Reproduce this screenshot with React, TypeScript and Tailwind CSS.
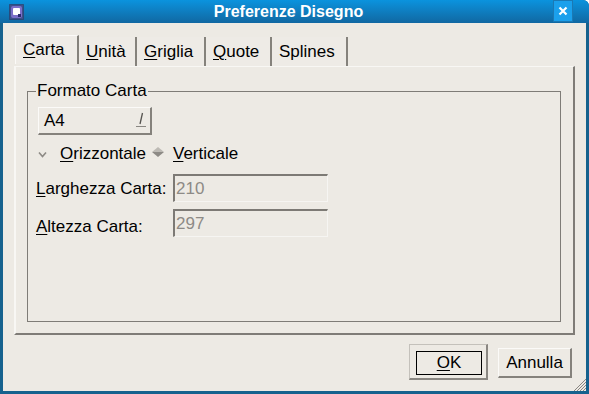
import type { ReactNode } from "react";

function AppIcon() {
  return (
    <svg width="15" height="16" viewBox="0 0 15 16" aria-hidden>
      <rect x="0.5" y="0.5" width="14" height="15" fill="#3f4f8a" stroke="#2a3358" strokeDasharray="1 1" />
      <rect x="2" y="2" width="11" height="12" rx="2" fill="#7b6fc9" />
      <rect x="4" y="4" width="7" height="7" rx="1" fill="#ffffff" />
      <rect x="9" y="10" width="3" height="3" fill="#2b2b6e" />
    </svg>
  );
}

function Mn({ children }: { children: ReactNode }) {
  return <span className="underline underline-offset-[2px] decoration-1">{children}</span>;
}

function Tab({ w, active, children }: { w: string; active?: boolean; children: ReactNode }) {
  return (
    <div
      className={`${w} flex h-[29px] items-center border-r-2 border-r-[#85827c] pl-[7px] ${
        active ? "border-l border-t border-l-[#fbfaf8] border-t-[#fbfaf8] bg-[#efece7]" : "mt-[2px] h-[27px] bg-[#eeebe6]"
      }`}
    >
      {children}
    </div>
  );
}

export default function App() {
  return (
    <div className="flex h-[394px] w-[589px] flex-col overflow-hidden rounded-tr-[6px] bg-[#16628e] font-['Liberation_Sans',Arial,sans-serif] text-[17px] leading-[20px] text-black">
      {/* title bar */}
      <div className="flex h-[23px] items-center bg-gradient-to-b from-[#0a93de] to-[#1068a2] pl-[9px]">
        <AppIcon />
        <div className="flex-1 text-center text-[16px] font-bold text-white">Preferenze Disegno</div>
        <div className="mr-[16px] flex h-[22px] w-[20px] items-center justify-center self-start border border-[#1b79b4] bg-[#1ba0ec]">
          <svg width="10" height="10" viewBox="0 0 10 10" aria-hidden>
            <path d="M1.5 1.5 L8.5 8.5 M8.5 1.5 L1.5 8.5" stroke="#ffffff" strokeWidth="2.2" />
          </svg>
        </div>
      </div>

      {/* body */}
      <div className="relative mx-[3px] mb-[3px] flex flex-1 flex-col bg-[#edeae4]">
        {/* tabs */}
        <div className="flex pl-[12px] pt-[12px]">
          <Tab w="w-[64px]" active>
            <span><Mn>C</Mn>arta</span>
          </Tab>
          <Tab w="w-[58px]">
            <span><Mn>U</Mn>nità</span>
          </Tab>
          <Tab w="w-[69px]">
            <span><Mn>G</Mn>riglia</span>
          </Tab>
          <Tab w="w-[66px]">
            <span><Mn>Q</Mn>uote</span>
          </Tab>
          <Tab w="w-[76px]">
            <span>Splines</span>
          </Tab>
        </div>

        {/* panel */}
        <div className="ml-[11px] h-[269px] w-[561px] border-b-2 border-l-2 border-r-2 border-t border-b-[#7f7c77] border-l-[#f8f7f4] border-r-[#7f7c77] border-t-[#f8f7f4] pl-[11px] pt-[24px]">
          <div className="relative flex h-[231px] w-[534px] flex-col border border-[#7f7c77]">
            <span className="absolute -top-[11px] left-[8px] bg-[#edeae4] px-[1px]">Formato Carta</span>

            {/* option menu */}
            <div className="ml-[10px] mt-[15px] flex h-[28px] w-[114px] items-center justify-between border-b-2 border-l border-r-2 border-t border-b-[#85827c] border-l-[#fbfaf8] border-r-[#85827c] border-t-[#fbfaf8] pl-[5px] pr-[3px]">
              <span>A4</span>
              <svg width="12" height="17" viewBox="0 0 12 17" aria-hidden>
                <path d="M7.5 1 L5 12" stroke="#55534f" strokeWidth="1.3" />
                <path d="M1 14.5 H11" stroke="#8a8782" strokeWidth="1" />
              </svg>
            </div>

            {/* radio row */}
            <div className="mt-[9px] flex h-[20px] items-center">
              <svg className="ml-[10px]" width="9" height="7" viewBox="0 0 9 7" aria-hidden>
                <path d="M1 1.5 L4.5 5.5 L8 1.5" fill="none" stroke="#8d8a85" strokeWidth="1.6" />
              </svg>
              <span className="ml-[13px]"><Mn>O</Mn>rizzontale</span>
              <svg className="ml-[6px] -mt-[4px]" width="12" height="10" viewBox="0 0 12 10" aria-hidden>
                <polygon points="6,0 12,5 0,5" fill="#bdbab4" />
                <polygon points="0,5 12,5 6,10" fill="#8d8a85" />
              </svg>
              <span className="ml-[9px]"><Mn>V</Mn>erticale</span>
            </div>

            {/* Larghezza */}
            <div className="mt-[10px] flex items-end">
              <span className="ml-[8px] w-[137px] pb-[3px]"><Mn>L</Mn>arghezza Carta:</span>
              <div className="flex h-[28px] w-[155px] items-center border-b border-l-2 border-r border-t-2 border-b-[#f6f5f2] border-l-[#7d7a75] border-r-[#f6f5f2] border-t-[#7d7a75] pl-[1px] text-[#8d8a86]">
                210
              </div>
            </div>

            {/* Altezza */}
            <div className="mt-[7px] flex items-end">
              <span className="ml-[8px] w-[137px]"><Mn>A</Mn>ltezza Carta:</span>
              <div className="flex h-[28px] w-[155px] items-center border-b border-l-2 border-r border-t-2 border-b-[#f6f5f2] border-l-[#7d7a75] border-r-[#f6f5f2] border-t-[#7d7a75] pl-[1px] text-[#8d8a86]">
                297
              </div>
            </div>
          </div>
        </div>

        {/* buttons */}
        <div className="mr-[14px] mt-[9px] flex items-start justify-end">
          <div className="h-[36px] w-[79px] border-b-2 border-l border-r-2 border-t border-b-[#8a8782] border-l-[#c4c1bb] border-r-[#8a8782] border-t-[#c4c1bb] pl-[6px] pt-[6px]">
            <div className="flex h-[24px] w-[66px] items-center justify-center border border-black">
              <span><Mn>O</Mn>K</span>
            </div>
          </div>
          <div className="ml-[10px] mt-[4px] flex h-[30px] w-[74px] items-center justify-center border-b-2 border-l border-r-2 border-t border-b-[#85827c] border-l-[#fbfaf8] border-r-[#85827c] border-t-[#fbfaf8]">
            Annulla
          </div>
        </div>

        {/* resize grip */}
        <svg className="absolute bottom-0 right-0" width="13" height="13" viewBox="0 0 13 13" aria-hidden>
          <path d="M13 1 L1 13 M13 4 L4 13 M13 7 L7 13 M13 10 L10 13" stroke="#8a8782" strokeWidth="1" />
        </svg>
      </div>
    </div>
  );
}
